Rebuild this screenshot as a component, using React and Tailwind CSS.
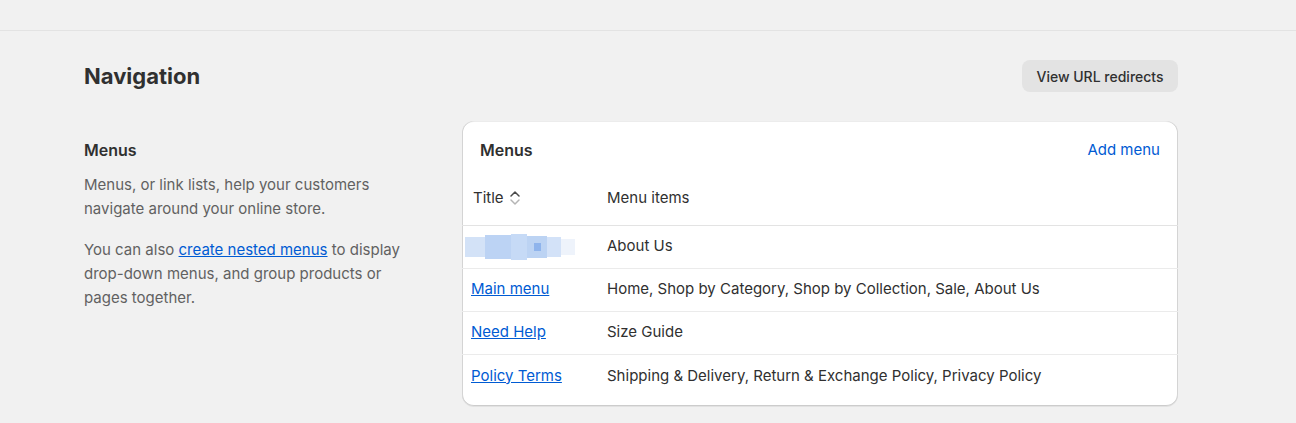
import React from "react";

export default function App() {
  const rows = [
    { title: null, items: "About Us" },
    { title: "Main menu", items: "Home, Shop by Category, Shop by Collection, Sale, About Us" },
    { title: "Need Help", items: "Size Guide" },
    { title: "Policy Terms", items: "Shipping & Delivery, Return & Exchange Policy, Privacy Policy" },
  ];

  return (
    <div
      className="min-h-screen bg-[#f1f1f1] text-[#303030]"
      style={{ fontFamily: "Inter, 'Noto Sans', sans-serif" }}
    >
      {/* top bar */}
      <div className="h-[31px] border-b border-[#e3e3e3] bg-[#f1f1f1]" />

      <div className="ml-[84px] w-[1094px] pt-[29px]">
        {/* Header */}
        <div className="flex items-center justify-between">
          <h1 className="text-[22px] font-bold leading-[32px] text-[#303030]">Navigation</h1>
          <button className="h-[32px] w-[156px] rounded-lg bg-[#e3e3e3] text-[14px] font-medium text-[#303030]">
            View URL redirects
          </button>
        </div>

        {/* Section */}
        <div className="mt-[29px] grid grid-cols-[378px_1fr]">
          <div className="pt-[19px]">
            <h2 className="text-[16px] font-semibold leading-[20px] text-[#303030]">Menus</h2>
            <p className="mt-[13px] w-[332px] text-[15px] leading-[24px] text-[#616161]">
              Menus, or link lists, help your customers navigate around your online store.
            </p>
            <p className="mt-[17px] w-[332px] text-[15px] leading-[24px] text-[#616161]">
              You can also{" "}
              <a className="text-[#005bd3] underline" href="#">
                create nested menus
              </a>{" "}
              to display drop-down menus, and group products or pages together.
            </p>
          </div>

          <div className="overflow-hidden rounded-xl bg-white pb-[8px] shadow-[0_1px_0_0_rgba(26,26,26,0.07),0_1px_0_0_rgba(208,208,208,0.4)_inset,1px_0_0_0_#d4d4d4_inset,-1px_0_0_0_#d4d4d4_inset,0_-1px_0_0_#cccccc_inset]">
            <div className="flex items-center justify-between px-[18px] pt-[18px]">
              <h3 className="text-[16px] font-semibold leading-[22px] text-[#303030]">Menus</h3>
              <a href="#" className="text-[15px] text-[#005bd3]">Add menu</a>
            </div>

            <div className="mt-[10px] flex h-[54px] items-center border-b border-[#e3e3e3] text-[15px] text-[#303030]">
              <div className="flex w-[145px] items-center gap-[5px] pl-[11px]">
                <span>Title</span>
                <svg width="12" height="18" viewBox="0 0 12 18" fill="none">
                  <path d="M2 7 L6 3 L10 7" stroke="#4a4a4a" strokeWidth="1.5" strokeLinecap="round" strokeLinejoin="round" />
                  <path d="M2 11 L6 15 L10 11" stroke="#b5b5b5" strokeWidth="1.5" strokeLinecap="round" strokeLinejoin="round" />
                </svg>
              </div>
              <div>Menu items</div>
            </div>

            {rows.map((row, i) => (
              <div
                key={i}
                className={`flex h-[43px] items-center text-[15px] text-[#303030] ${
                  i < rows.length - 1 ? "border-b border-[#ebebeb]" : ""
                }`}
              >
                <div className="w-[145px] pl-[9px]">
                  {row.title ? (
                    <a href="#" className="text-[#005bd3] underline">
                      {row.title}
                    </a>
                  ) : (
                    <div className="-ml-[6px] flex h-[28px] w-[110px] items-center">
                      <div className="h-[20px] w-[20px] bg-[#d3e2f7]" />
                      <div className="h-[24px] w-[26px] bg-[#bcd3f4]" />
                      <div className="h-[26px] w-[16px] bg-[#c6daf6]" />
                      <div className="flex h-[22px] w-[20px] items-center justify-center bg-[#bcd3f3]">
                        <div className="h-[8px] w-[7px] bg-[#8fb4ec]" />
                      </div>
                      <div className="h-[20px] w-[14px] bg-[#d3e2f8]" />
                      <div className="h-[16px] w-[14px] bg-[#eef3fb]" />
                    </div>
                  )}
                </div>
                <div>{row.items}</div>
              </div>
            ))}
          </div>
        </div>
      </div>
    </div>
  );
}
